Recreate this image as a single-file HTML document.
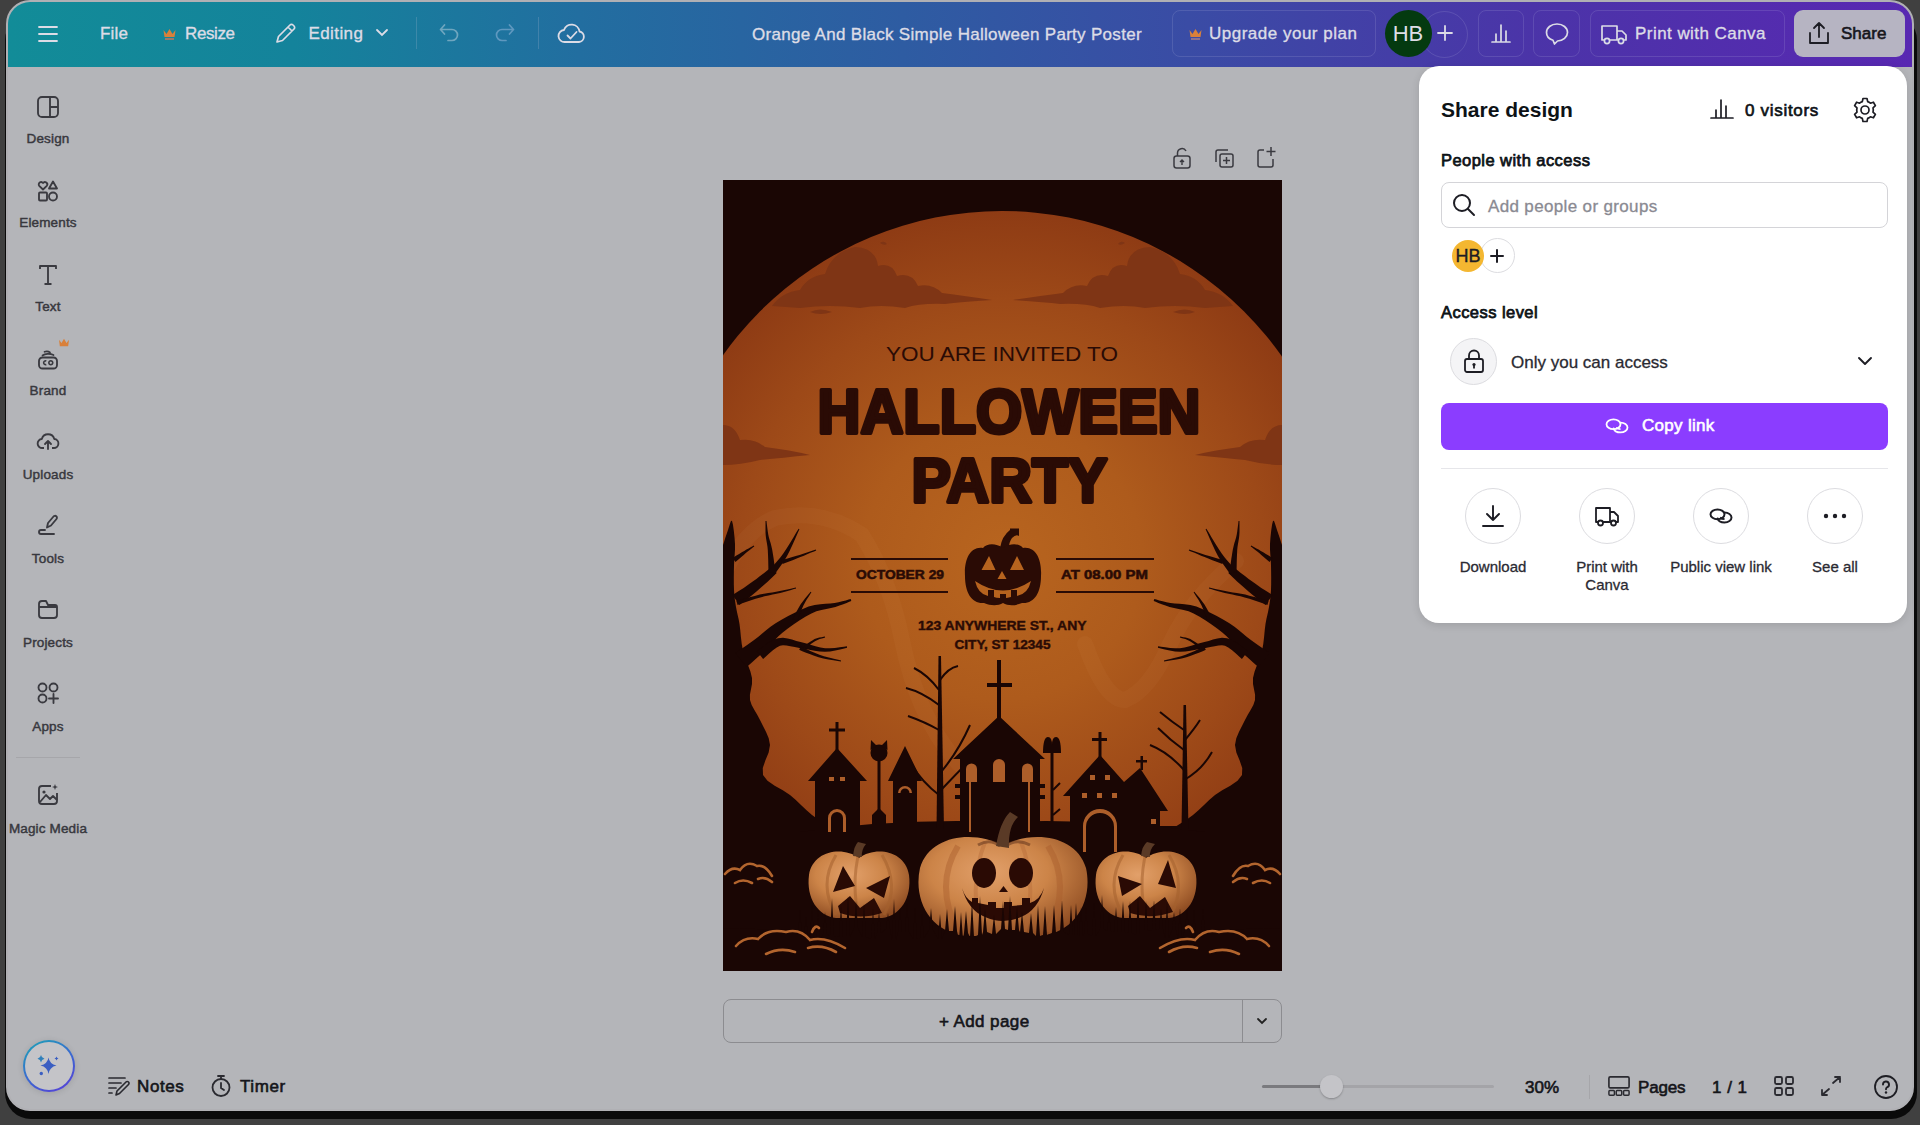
<!DOCTYPE html>
<html><head><meta charset="utf-8">
<style>
*{margin:0;padding:0;box-sizing:border-box}
html,body{width:1920px;height:1125px;overflow:hidden;background:#404040;font-family:"Liberation Sans",sans-serif}
.abs{position:absolute}
#shadow{position:absolute;left:4.5px;top:14px;width:1912px;height:1105px;border-radius:26px;background:#0a0a0a}
#win{position:absolute;left:6px;top:0px;width:1908px;height:1111px;border-radius:24px;background:#b4b5b9;border:2px solid #b0b0b4}
#hdr{position:absolute;left:8px;top:2px;width:1904px;height:65px;border-radius:22px 22px 0 0;background:linear-gradient(90deg,#128c98 0%,#14839b 15%,#226ea0 30%,#2e5ca2 47%,#3a4ca5 62%,#4b34a8 80%,#5828b2 100%)}
.ht{position:absolute;color:#dcdce6;font-size:17px;line-height:20px;white-space:nowrap;-webkit-text-stroke:0.35px currentColor}
.hbox{position:absolute;border:1px solid rgba(200,200,230,0.16);border-radius:8px}
.sb{position:absolute;left:0;width:96px;text-align:center;font-size:13.5px;letter-spacing:0.15px;color:#38383e;line-height:16px;-webkit-text-stroke:0.45px currentColor}
.sbi{position:absolute;left:36px;width:24px;height:24px}
.bt{position:absolute;color:#15151a;font-size:17px;line-height:20px;white-space:nowrap;-webkit-text-stroke:0.6px currentColor}
#panel{position:absolute;left:1419px;top:66px;width:488px;height:557px;background:#fff;border-radius:20px;box-shadow:0 2px 8px rgba(0,0,0,0.12)}
.pt{position:absolute;white-space:nowrap;color:#0d1216}
</style></head><body>
<div id="shadow"></div>
<div id="win"></div>
  <div id="hdr"></div>
  <div class="abs" style="left:7px;top:2px">
    <!-- hamburger -->
    <svg class="abs" style="left:31px;top:23px" width="20" height="18" viewBox="0 0 20 18"><path d="M1 2H19M1 9H19M1 16H19" stroke="#dcdce6" stroke-width="1.8" stroke-linecap="round"/></svg>
    <div class="ht" style="left:93px;top:22px;letter-spacing:0.2px">File</div>
    <svg class="abs" style="left:155px;top:25px" width="15" height="14" viewBox="0 0 15 14"><path d="M1.5 3L4.5 7L7.5 2L10.5 7L13.5 3L12.5 10H2.5Z" fill="#d9803a"/><rect x="3" y="11" width="9" height="2" fill="#9a7a6a"/></svg>
    <div class="ht" style="left:178px;top:22px;letter-spacing:-0.4px">Resize</div>
    <svg class="abs" style="left:267px;top:19px" width="24" height="24" viewBox="0 0 24 24"><path d="M3 21L4.5 15.5L16 4a2.1 2.1 0 0 1 3 0l1 1a2.1 2.1 0 0 1 0 3L8.5 19.5Z M14 6L18 10" fill="none" stroke="#dcdce6" stroke-width="1.7" stroke-linejoin="round"/></svg>
    <div class="ht" style="left:301.5px;top:22px;letter-spacing:0.4px">Editing</div>
    <svg class="abs" style="left:368px;top:26px" width="14" height="10" viewBox="0 0 14 10"><path d="M2 2L7 7L12 2" fill="none" stroke="#dcdce6" stroke-width="1.8" stroke-linecap="round"/></svg>
    <div class="abs" style="left:409px;top:15px;width:1px;height:32px;background:rgba(200,200,220,0.2)"></div>
    <svg class="abs" style="left:430px;top:19px" width="26" height="24" viewBox="0 0 26 24"><path d="M7.5 4L3.5 8.5L7.5 13M3.5 8.5H15a5.5 5.5 0 0 1 0 11H11" fill="none" stroke="#6fa6bf" stroke-width="1.7" stroke-linecap="round" stroke-linejoin="round"/></svg>
    <svg class="abs" style="left:484px;top:19px" width="26" height="24" viewBox="0 0 26 24"><path d="M18.5 4L22.5 8.5L18.5 13M22.5 8.5H11a5.5 5.5 0 0 0 0 11H15" fill="none" stroke="#5f98bf" stroke-width="1.7" stroke-linecap="round" stroke-linejoin="round"/></svg>
    <div class="abs" style="left:531px;top:15px;width:1px;height:32px;background:rgba(200,200,220,0.2)"></div>
    <svg class="abs" style="left:550px;top:18px" width="30" height="28" viewBox="0 0 30 28"><path d="M8 22a6 6 0 0 1-1-12a8 8 0 0 1 15.5 1.5a5.3 5.3 0 0 1 -0.5 10.5Z" fill="none" stroke="#dcdce6" stroke-width="1.8" stroke-linejoin="round"/><path d="M10.5 15.5L13.5 18.5L19.5 12" fill="none" stroke="#dcdce6" stroke-width="1.8" stroke-linecap="round" stroke-linejoin="round"/></svg>
    <div class="ht" style="left:745px;top:23px;letter-spacing:0.3px">Orange And Black Simple Halloween Party Poster</div>
    <div class="hbox" style="left:1165px;top:8px;width:204px;height:47px"></div>
    <svg class="abs" style="left:1181px;top:25px" width="15" height="14" viewBox="0 0 15 14"><path d="M1.5 3L4.5 7L7.5 2L10.5 7L13.5 3L12.5 10H2.5Z" fill="#d9803a"/><rect x="3" y="11" width="9" height="2" fill="#8a7090"/></svg>
    <div class="ht" style="left:1202px;top:22px;letter-spacing:0.5px">Upgrade your plan</div>
    <div class="abs" style="left:1414px;top:8.5px;width:47px;height:47px;border-radius:50%;border:1px solid rgba(200,200,230,0.16)"></div>
    <div class="abs" style="left:1377.5px;top:7.5px;width:47px;height:47px;border-radius:50%;background:#043a10;color:#dedee6;font-size:22px;line-height:47px;text-align:center">HB</div>
    <svg class="abs" style="left:1429px;top:22px" width="18" height="18" viewBox="0 0 18 18"><path d="M9 2V16M2 9H16" stroke="#dcdce6" stroke-width="1.8" stroke-linecap="round"/></svg>
    <div class="hbox" style="left:1471px;top:8px;width:46px;height:47px"></div>
    <svg class="abs" style="left:1482px;top:19px" width="24" height="24" viewBox="0 0 24 24"><path d="M3 21H21M7 20V13M12 20V4M17 20V10" stroke="#dcdce6" stroke-width="1.7" stroke-linecap="round"/></svg>
    <div class="hbox" style="left:1526px;top:8px;width:47px;height:47px"></div>
    <svg class="abs" style="left:1537px;top:19px" width="26" height="26" viewBox="0 0 26 26"><path d="M13 3C7 3 2.5 6.8 2.5 11.5c0 3.6 2.6 6.6 6.5 7.8l1.5 3.7l3-3C19 19.8 23.5 16 23.5 11.5C23.5 6.8 19 3 13 3Z" fill="none" stroke="#dcdce6" stroke-width="1.7" stroke-linejoin="round"/></svg>
    <div class="hbox" style="left:1583px;top:8px;width:195px;height:47px"></div>
    <svg class="abs" style="left:1593px;top:20px" width="28" height="24" viewBox="0 0 28 24"><path d="M2 4H17V18H2Z M17 9H22L26 13V18H17" fill="none" stroke="#dcdce6" stroke-width="1.7" stroke-linejoin="round"/><circle cx="7" cy="19" r="2.6" fill="#4b3ab2" stroke="#dcdce6" stroke-width="1.7"/><circle cx="21" cy="19" r="2.6" fill="#4b3ab2" stroke="#dcdce6" stroke-width="1.7"/></svg>
    <div class="ht" style="left:1628px;top:22px;letter-spacing:0.45px">Print with Canva</div>
    <div class="abs" style="left:1787px;top:8px;width:111px;height:47px;border-radius:9px;background:#b6b4c2"></div>
    <svg class="abs" style="left:1799px;top:18px" width="26" height="26" viewBox="0 0 26 26"><path d="M13 17V3M8 8L13 3L18 8M4 13V23H22V13" fill="none" stroke="#1d1d24" stroke-width="1.8" stroke-linecap="round" stroke-linejoin="round"/></svg>
    <div class="ht" style="left:1834px;top:22px;color:#16161c;-webkit-text-stroke:0.6px #16161c">Share</div>
  </div>

  <!-- sidebar -->
  <svg class="abs" style="left:36px;top:95px" width="24" height="24" viewBox="0 0 24 24"><rect x="2" y="2" width="20" height="20" rx="4" fill="none" stroke="#3a3a40" stroke-width="1.85"/><path d="M14 2V22M14 12H22" stroke="#3a3a40" stroke-width="1.85"/></svg>
  <div class="sb" style="top:131px">Design</div>
  <svg class="abs" style="left:36px;top:179px" width="24" height="24" viewBox="0 0 24 24"><path d="M7 10.5L3.2 6.8A2.3 2.3 0 0 1 7 4A2.3 2.3 0 0 1 10.8 6.8Z" fill="none" stroke="#3a3a40" stroke-width="1.85" stroke-linejoin="round"/><path d="M17 2.5L21 9.5H13Z" fill="none" stroke="#3a3a40" stroke-width="1.85" stroke-linejoin="round"/><rect x="3" y="13.5" width="8" height="8" rx="1" fill="none" stroke="#3a3a40" stroke-width="1.85"/><circle cx="17" cy="17.5" r="4" fill="none" stroke="#3a3a40" stroke-width="1.85"/></svg>
  <div class="sb" style="top:215px">Elements</div>
  <svg class="abs" style="left:36px;top:263px" width="24" height="24" viewBox="0 0 24 24"><path d="M4 6V3H20V6M12 3V21M8.5 21H15.5" fill="none" stroke="#3a3a40" stroke-width="1.85" stroke-linejoin="round"/></svg>
  <div class="sb" style="top:299px">Text</div>
  <svg class="abs" style="left:36px;top:347px" width="24" height="24" viewBox="0 0 24 24"><rect x="3" y="10.5" width="18" height="11" rx="3.5" fill="none" stroke="#3a3a40" stroke-width="1.85"/><path d="M6.5 8.5C9 6.5 14 6.2 17.5 8M8.500 4.800C10.500 4 12.500 4.300 14 5.500" fill="none" stroke="#3a3a40" stroke-width="1.7" stroke-linecap="round"/><path d="M10.3 14A1.9 1.9 0 1 0 10.3 17.5M14.8 13.8A1.95 1.95 0 1 0 14.8 17.7A1.95 1.95 0 1 0 14.8 13.8" fill="none" stroke="#3a3a40" stroke-width="1.6"/></svg>
  <svg class="abs" style="left:58px;top:338px" width="12" height="10" viewBox="0 0 14 12"><path d="M1 2L4 6L7 1L10 6L13 2L12 10H2Z" fill="#d9803a"/></svg>
  <div class="sb" style="top:383px">Brand</div>
  <svg class="abs" style="left:36px;top:429px" width="24" height="24" viewBox="0 0 24 24"><path d="M8 19H6.5A4.5 4.5 0 0 1 5.8 10A6.5 6.5 0 0 1 18.3 10A4.5 4.5 0 0 1 17.5 19H16" fill="none" stroke="#3a3a40" stroke-width="1.85" stroke-linejoin="round"/><path d="M12 20V12.5M9 15L12 12L15 15" fill="none" stroke="#3a3a40" stroke-width="1.85" stroke-linecap="round" stroke-linejoin="round"/></svg>
  <div class="sb" style="top:467px">Uploads</div>
  <svg class="abs" style="left:36px;top:513px" width="24" height="24" viewBox="0 0 24 24"><path d="M11 14.5L12 10L17.5 3.5A1.8 1.8 0 0 1 20.5 6L15 12.5Z" fill="none" stroke="#3a3a40" stroke-width="1.85" stroke-linejoin="round"/><path d="M9 17H5A2 2 0 0 0 5 21H18" fill="none" stroke="#3a3a40" stroke-width="1.85" stroke-linecap="round"/></svg>
  <div class="sb" style="top:551px">Tools</div>
  <svg class="abs" style="left:36px;top:597px" width="24" height="24" viewBox="0 0 24 24"><path d="M3 7V18A3 3 0 0 0 6 21H18A3 3 0 0 0 21 18V10A2 2 0 0 0 19 8H12L10 4H6A3 3 0 0 0 3 7ZM3 10H21" fill="none" stroke="#3a3a40" stroke-width="1.85" stroke-linejoin="round"/></svg>
  <div class="sb" style="top:635px">Projects</div>
  <svg class="abs" style="left:36px;top:681px" width="24" height="24" viewBox="0 0 24 24"><circle cx="6.5" cy="6.5" r="4" fill="none" stroke="#3a3a40" stroke-width="1.85"/><circle cx="17.5" cy="6.5" r="4" fill="none" stroke="#3a3a40" stroke-width="1.85"/><circle cx="6.5" cy="17.5" r="4" fill="none" stroke="#3a3a40" stroke-width="1.85"/><path d="M17.5 13V22M13 17.5H22" stroke="#3a3a40" stroke-width="1.85" stroke-linecap="round"/></svg>
  <div class="sb" style="top:719px">Apps</div>
  <div class="abs" style="left:16px;top:757px;width:64px;height:1px;background:#a6a6aa"></div>
  <svg class="abs" style="left:36px;top:783px" width="24" height="24" viewBox="0 0 24 24"><path d="M15 3H6A3 3 0 0 0 3 6V18A3 3 0 0 0 6 21H18A3 3 0 0 0 21 18V10" fill="none" stroke="#3a3a40" stroke-width="1.85"/><path d="M4 19L10 12L14 16L17 13L21 17" fill="none" stroke="#3a3a40" stroke-width="1.85" stroke-linejoin="round"/><circle cx="8" cy="9" r="1.6" fill="#3a3a40"/><path d="M19 1L19.8 3.2L22 4L19.8 4.8L19 7L18.2 4.8L16 4L18.2 3.2Z" fill="#3a3a40"/></svg>
  <div class="sb" style="top:821px">Magic Media</div>

  <!-- poster -->
<svg class="abs" style="left:723px;top:180px" width="559" height="791" viewBox="723 180 559 791">
<defs>
<radialGradient id="moon" cx="1002" cy="560" r="350" gradientUnits="userSpaceOnUse">
<stop offset="0" stop-color="#b8651f"/><stop offset="0.4" stop-color="#ae5b1c"/><stop offset="0.75" stop-color="#9d4918"/><stop offset="1" stop-color="#8e3b14"/>
</radialGradient>
<radialGradient id="pk" cx="0.42" cy="0.35" r="0.7">
<stop offset="0" stop-color="#e2a06a"/><stop offset="0.5" stop-color="#cc8448"/><stop offset="1" stop-color="#8e4c22"/>
</radialGradient>
<g id="treeL" fill="#1a0604">
<path d="M723.0 545.0 L723.921875 542.1640625 L725.25 538.0625 L726.703125 533.6796875 L728.0 530.0 L729.09375 526.578125 L730.125 523.125 L731.09375 520.859375 L732.0 521.0 L732.9140625 524.546875 L733.8125 530.625 L734.5546875 537.640625 L735.0 544.0 L735.0078125 549.296875 L734.6875 554.375 L734.2734375 559.515625 L734.0 565.0 L733.8828125 571.15625 L733.8125 577.75 L733.8359375 584.21875 L734.0 590.0 L734.32421875 594.8125 L734.78125 599.0 L735.34765625 602.9375 L736.0 607.0 L736.76953125 611.015625 L737.65625 614.875 L738.58984375 619.046875 L739.5 624.0 L740.24609375 630.046875 L740.90625 636.875 L741.73828125 644.015625 L743.0 651.0 L745.12109375 657.8671875 L747.84375 664.8125 L750.39453125 671.6015625 L752.0 678.0 L751.9921875 683.8984375 L750.9375 689.4375 L749.9140625 694.7578125 L750.0 700.0 L751.65625 705.0234375 L754.25 709.8125 L757.21875 714.6953125 L760.0 720.0 L762.8984375 725.78125 L766.0625 731.875 L768.6953125 738.28125 L770.0 745.0 L768.6484375 752.3828125 L765.4375 760.3125 L762.7578125 768.0859375 L763.0 775.0 L767.4765625 780.703125 L774.6875 785.625 L782.8046875 790.234375 L790.0 795.0 L795.828125 800.1171875 L801.25 805.3125 L806.546875 810.3515625 L812.0 815.0 L818.21875 819.453125 L824.875 823.75 L830.84375 827.421875 L835 830 L723 830 Z"/>
<path d="M735.5 562.0 L736.9 560.8 L739.0 559.0 L741.3 556.9 L743.7 554.9 L745.8 553.1 L747.7 551.6 L749.7 550.0 L751.6 548.5 L753.1 547.3 L754.3 546.4 L753.7 545.6 L752.5 546.3 L750.7 547.2 L748.6 548.4 L746.4 549.6 L744.2 550.9 L741.8 552.3 L739.1 553.9 L736.4 555.6 L734.1 557.0 L732.5 558.0Z"/>
<path d="M739.5 604.9 L741.3 603.5 L743.9 601.5 L746.9 599.2 L750.1 596.7 L753.2 594.2 L756.2 591.7 L759.3 589.0 L762.4 586.3 L765.3 583.8 L767.9 581.4 L770.2 579.3 L772.3 577.3 L774.1 575.5 L775.6 574.0 L776.7 573.0 L771.3 567.0 L770.1 568.0 L768.5 569.4 L766.6 571.0 L764.5 572.7 L762.1 574.6 L759.4 576.6 L756.4 578.9 L753.1 581.3 L749.9 583.6 L746.8 585.8 L743.7 587.9 L740.4 590.0 L737.2 592.1 L734.5 593.8 L732.5 595.1Z"/>
<path d="M775.5 571.7 L775.1 568.6 L774.4 564.2 L773.7 559.1 L772.9 554.1 L772.2 549.7 L771.4 546.2 L770.6 543.1 L769.7 540.2 L768.9 537.5 L768.3 534.8 L767.8 531.8 L767.4 528.6 L767.0 525.5 L766.7 522.9 L766.5 521.0 L765.5 521.0 L765.5 522.9 L765.5 525.6 L765.5 528.7 L765.5 532.0 L765.7 535.2 L766.0 538.1 L766.5 541.0 L767.0 543.8 L767.5 546.9 L767.8 550.3 L768.0 554.6 L768.2 559.6 L768.3 564.7 L768.4 569.2 L768.5 572.3Z"/>
<path d="M774.7 574.2 L776.3 571.9 L778.6 568.8 L781.3 565.0 L784.2 560.7 L786.9 556.2 L789.6 550.9 L792.5 544.7 L795.3 538.5 L797.7 533.0 L799.4 529.2 L798.6 528.8 L796.4 532.3 L793.4 537.5 L789.9 543.3 L786.3 549.0 L783.1 553.8 L780.1 557.8 L776.9 561.5 L773.8 564.9 L771.2 567.7 L769.3 569.8Z"/>
<path d="M782.6 563.9 L785.1 563.0 L788.5 561.7 L792.6 560.2 L796.7 558.6 L800.4 557.1 L803.9 555.7 L807.6 554.1 L811.1 552.6 L814.1 551.4 L816.2 550.5 L815.8 549.5 L813.6 550.3 L810.6 551.3 L807.0 552.5 L803.2 553.7 L799.6 554.9 L795.8 556.0 L791.6 557.2 L787.5 558.4 L783.9 559.4 L781.4 560.1Z"/>
<path d="M737.6 604.9 L740.8 603.8 L745.2 602.3 L750.4 600.5 L755.6 598.8 L760.3 597.4 L764.5 596.3 L768.6 595.4 L772.6 594.5 L776.5 593.7 L780.2 592.9 L783.9 591.9 L787.6 590.9 L791.1 589.9 L794.0 589.1 L796.1 588.5 L795.9 587.5 L793.7 588.0 L790.8 588.7 L787.3 589.5 L783.5 590.3 L779.8 591.1 L776.1 591.8 L772.2 592.4 L768.2 593.0 L764.0 593.7 L759.7 594.6 L754.8 595.9 L749.4 597.3 L744.1 598.8 L739.6 600.2 L736.4 601.1Z"/>
<path d="M746.5 667.1 L749.0 664.9 L752.4 661.9 L756.5 658.3 L760.8 654.5 L764.9 650.7 L768.5 647.0 L771.8 643.3 L775.0 639.8 L778.4 636.3 L782.4 632.8 L787.5 628.8 L793.4 624.5 L799.7 620.2 L805.8 616.4 L811.4 613.4 L816.4 611.3 L821.4 610.0 L826.3 609.0 L831.0 608.1 L835.4 607.0 L839.5 605.6 L843.3 604.2 L846.6 602.9 L849.3 601.8 L851.3 600.9 L850.7 599.1 L848.6 599.6 L845.8 600.4 L842.3 601.3 L838.5 602.2 L834.6 603.0 L830.3 603.5 L825.6 603.8 L820.4 604.2 L814.7 605.0 L808.6 606.6 L802.2 609.2 L795.2 612.4 L788.2 616.0 L781.5 619.7 L775.6 623.2 L770.5 626.7 L766.1 630.2 L762.2 633.5 L758.7 636.5 L755.1 639.3 L751.0 642.3 L746.4 645.4 L742.0 648.5 L738.2 651.0 L735.5 652.9Z"/>
<path d="M797.3 621.0 L798.1 618.9 L799.2 615.9 L800.5 612.4 L801.9 608.9 L803.3 605.7 L804.9 602.8 L806.7 599.6 L808.6 596.7 L810.3 594.1 L811.4 592.3 L810.6 591.7 L809.2 593.4 L807.3 595.7 L805.0 598.4 L802.8 601.4 L800.7 604.3 L798.8 607.4 L797.0 610.8 L795.2 614.1 L793.8 617.0 L792.7 619.0Z"/>
<path d="M763.1 658.9 L765.6 656.7 L769.1 653.6 L772.9 650.2 L776.7 647.4 L780.0 645.8 L783.0 645.3 L786.5 645.5 L790.4 646.2 L794.8 647.1 L799.4 647.9 L804.2 648.7 L809.3 649.7 L814.5 650.7 L819.8 651.5 L824.9 651.8 L830.1 651.4 L835.3 650.5 L840.1 649.4 L844.2 648.4 L847.1 647.7 L846.9 646.3 L843.9 646.7 L839.7 647.3 L834.9 647.9 L829.8 648.3 L825.1 648.2 L820.4 647.5 L815.5 646.3 L810.4 644.8 L805.4 643.3 L800.6 642.1 L796.3 640.9 L792.0 639.6 L787.6 638.4 L783.0 637.8 L778.0 638.2 L772.8 640.1 L767.8 643.1 L763.2 646.4 L759.5 649.2 L756.9 651.1Z"/>
<path d="M805.9 648.2 L807.2 647.1 L809.1 645.6 L811.2 643.8 L813.4 642.2 L815.4 640.9 L817.5 639.9 L819.7 639.1 L821.9 638.4 L823.8 637.9 L825.1 637.5 L824.9 636.5 L823.5 636.8 L821.6 637.2 L819.3 637.6 L816.9 638.3 L814.6 639.1 L812.3 640.4 L809.8 641.9 L807.5 643.5 L805.5 644.8 L804.1 645.8Z"/>
<path d="M799.2 649.8 L801.7 650.9 L805.4 652.4 L809.6 654.1 L814.2 655.8 L818.6 657.2 L823.3 658.4 L828.4 659.4 L833.5 660.2 L837.8 661.0 L840.9 661.5 L841.1 660.5 L838.1 659.8 L833.8 658.8 L828.8 657.5 L823.8 656.2 L819.4 654.8 L815.2 653.1 L810.9 651.2 L806.8 649.2 L803.3 647.4 L800.8 646.2Z"/>
</g>
<g id="cloudL" fill="#7f3515"><path d="M772 306 Q782 292 800 290 Q808 276 825 274 Q832 252 855 247 Q876 248 878 266 Q892 262 897 276 Q912 272 918 286 Q932 283 942 293 Q965 296 992 300 Q960 302 945 304 Q920 303 905 308 Q880 304 860 308 Q830 304 800 308 Z M810 312 Q820 307 832 312 Q820 316 810 312 Z M880 243 Q884 240 887 244 Q884 246 880 243Z"/><path d="M723 425 Q735 425 740 440 Q755 438 765 447 Q790 450 810 455 Q780 458 760 460 Q740 465 723 465 Z"/></g>
<g id="bushL" fill="none" stroke="#b3652e" stroke-width="2.6" stroke-linecap="round">
<path d="M725 874 Q732 866 740 870 Q747 860 757 866 Q765 864 772 876"/>
<path d="M735 883 Q743 878 752 883 M758 879 Q765 876 772 882"/>
<path d="M736 946 Q745 936 758 939 Q768 928 786 932 Q800 928 810 940 Q825 936 845 948"/>
<path d="M766 954 Q780 947 795 952 M808 948 Q822 944 836 952"/>
<path d="M812 932 Q815 924 819 928"/>
</g>
</defs>
<rect x="723" y="180" width="559" height="791" fill="#1a0604"/>
<circle cx="1002" cy="553" r="342" fill="url(#moon)"/>
<path d="M726 570 Q745 530 775 518 Q822 508 862 535 Q890 580 902 640 Q918 720 960 765 M1085 644 Q1105 700 1125 700 Q1150 690 1170 644 Q1190 600 1236 561" fill="none" stroke="#ffd0a0" stroke-opacity="0.04" stroke-width="16" stroke-linecap="round"/>
<use href="#cloudL"/>
<use href="#cloudL" transform="translate(2005 0) scale(-1 1)"/>
<use href="#treeL"/>
<use href="#treeL" transform="translate(2005 0) scale(-1 1)"/>
<rect x="723" y="826" width="559" height="145" fill="#1a0604"/>
<path d="M800 832 Q900 818 1002 822 Q1100 818 1205 832 Z" fill="#1a0604"/>
<g fill="#1a0604">
<path d="M808 781 L837 748 L867 781 L860 781 L860 832 L815 832 L815 781 Z"/>
<rect x="835.5" y="722" width="3" height="28"/><rect x="829" y="728.5" width="16" height="3"/>
<rect x="877.5" y="758" width="3" height="72"/><circle cx="879" cy="753" r="8.5"/><path d="M870.5 750 L871 740 L877 746 Z M887.5 750 L887 740 L881 746 Z"/>
<path d="M872 832 L872 815 L879 808 L886 815 L886 832Z"/>
<path d="M888 781 L905 746 L922 781 L917 781 L917 832 L893 832 L893 781 Z"/>
<path d="M936.5 830 L938.5 656 L941 656 L944 830 Z"/>
<path d="M939 690 Q928 675 914 668 M939 705 Q922 692 906 688 M939 730 Q925 722 908 716 M941 772 Q958 752 970 725 M941 790 Q960 770 978 752 M939 795 Q922 782 912 765 M940 680 Q948 668 958 666" stroke="#1a0604" stroke-width="2" fill="none"/>
<rect x="997" y="660" width="4" height="58"/><rect x="987" y="683" width="25" height="4"/>
<path d="M953 759 L999 716 L1045 759 L1040 759 L1040 832 L960 832 L960 759 Z"/>
<rect x="955" y="784" width="6" height="4"/><rect x="955" y="795" width="6" height="4"/><rect x="1039" y="784" width="6" height="4"/><rect x="1039" y="795" width="6" height="4"/>
<rect x="1050.5" y="745" width="3" height="85"/><path d="M1043 753 Q1043 737 1048 737 Q1052 737 1052 745 Q1052 737 1056 737 Q1061 737 1061 753 Z"/>
<path d="M1053 790 L1060 783 M1053 815 L1060 809" stroke="#1a0604" stroke-width="2"/>
<path d="M1063 796 L1100 755 L1124 782 L1140 768 L1168 811 L1160 811 L1160 832 L1070 832 L1070 796 Z"/>
<rect x="1098.5" y="732" width="3" height="25"/><rect x="1092" y="738" width="15" height="3"/>
<rect x="1140.5" y="756" width="2.5" height="14"/><rect x="1136" y="760" width="11" height="2.5"/>
<path d="M1181.5 830 L1183.5 705 L1186 705 L1188.5 830 Z"/>
<path d="M1184 770 Q1168 752 1150 745 M1184 780 Q1202 770 1212 752 M1184 730 Q1172 722 1160 712 M1184 750 Q1170 740 1158 728 M1185 740 Q1195 728 1200 720" stroke="#1a0604" stroke-width="2" fill="none"/>
</g>
<g fill="#ad5e2a">
<rect x="829" y="777" width="5" height="4"/><rect x="840" y="777" width="5" height="4"/>
<path d="M828 832 L828 818 A9 9 0 0 1 846 818 L846 832 L843 832 L843 818 A6 6 0 0 0 831 818 L831 832 Z"/>
<path d="M898 793 A7 7 0 0 1 912 793 L909.5 793 A4.5 4.5 0 0 0 900.5 793 Z"/>
<path d="M966 782 L966 769 A5.5 5.5 0 0 1 977 769 L977 782 Z"/><path d="M993 782 L993 765 A6 6 0 0 1 1005 765 L1005 782 Z"/><path d="M1022 782 L1022 769 A5.5 5.5 0 0 1 1033 769 L1033 782 Z"/>
<rect x="1090" y="775" width="5" height="5"/><rect x="1105" y="775" width="5" height="5"/>
<rect x="1082" y="793" width="5" height="5"/><rect x="1097" y="793" width="5" height="5"/><rect x="1112" y="793" width="5" height="5"/>
<path d="M1083 852 L1083 826 A16 16 0 0 1 1117 826 L1117 852 L1114 852 L1114 827 A13 13 0 0 0 1086 827 L1086 852 Z"/>
<rect x="1151" y="819" width="5" height="5"/>
<rect x="969" y="778" width="2" height="54" fill="#ad5e2a"/><rect x="1028" y="778" width="2" height="54"/>
</g>
<g>
<path d="M859 858 C875 846 905 850 909 875 C912 898 900 916 882 918 L836 918 C818 916 806 898 809 875 C813 850 843 846 859 858 Z" fill="url(#pk)"/>
<path d="M836 855 Q818 885 836 915 M882 855 Q900 885 884 915 M859 852 Q851 885 859 918" fill="none" stroke="#a4602e" stroke-width="3" opacity="0.55"/>
<path d="M853 856 Q854 846 858 842 L866 844 Q861 850 862 857 Z" fill="#5a3a26"/>
<path d="M833 892 L843 866 L855 886 Z M866 888 L890 876 L884 898 Z" fill="#2a0a04"/>
<path d="M838 906 L850 896 L860 908 L874 898 L882 913 Q860 920 840 913 Z" fill="#2a0a04"/>
<path d="M1003 846 C1030 830 1076 834 1086 868 C1093 900 1076 932 1040 936 L966 936 C930 932 913 900 920 868 C930 834 976 830 1003 846 Z" fill="url(#pk)"/>
<path d="M958 846 Q934 885 958 932 M1048 846 Q1072 885 1048 932" fill="none" stroke="#a85e2c" stroke-width="6" opacity="0.45"/>
<path d="M985 842 Q968 885 982 934 M1021 842 Q1038 885 1024 934" fill="none" stroke="#b56a36" stroke-width="4" opacity="0.4"/>
<path d="M978 845 Q990 838 1000 846 M1006 846 Q1016 838 1030 845" fill="none" stroke="#6a3a20" stroke-width="3" opacity="0.6"/>
<path d="M996 846 Q1000 822 1010 812 L1018 817 Q1008 826 1009 848 Z" fill="#5a3a26"/>
<ellipse cx="984" cy="873" rx="12" ry="15" fill="#2a0a04"/><ellipse cx="1021" cy="873" rx="12" ry="15" fill="#2a0a04"/>
<path d="M999 892 L1003.5 886 L1008 892 Z" fill="#2a0a04"/>
<path d="M962 888 Q968 910 985 917 Q1003 925 1021 917 Q1038 910 1044 888 Q1040 900 1030 903 L1030 898 L1022 898 L1022 905 L1012 906 L1012 902 L1004 902 L1004 908 L996 908 L996 902 L988 902 L988 905 L978 903 L978 898 L972 898 L972 902 Q965 898 962 888 Z" fill="#2a0a04"/>
<path d="M1146 858 C1162 846 1192 850 1196 875 C1199 898 1187 916 1169 918 L1123 918 C1105 916 1093 898 1096 875 C1100 850 1130 846 1146 858 Z" fill="url(#pk)"/>
<path d="M1123 855 Q1105 885 1123 915 M1169 855 Q1187 885 1171 915 M1146 852 Q1138 885 1146 918" fill="none" stroke="#a4602e" stroke-width="3" opacity="0.55"/>
<path d="M1141 856 Q1142 846 1147 842 L1155 844 Q1149 850 1150 857 Z" fill="#5a3a26"/>
<path d="M1118 876 L1142 884 L1122 896 Z M1158 884 L1168 860 L1176 888 Z" fill="#2a0a04"/>
<path d="M1128 906 L1140 896 L1150 908 L1165 897 L1173 912 Q1150 920 1130 913 Z" fill="#2a0a04"/>
</g>
<path d="M723 971 L723 928 L795 930 L798 935 L800 910 L802 935 L804 936 L806 917 L808 936 L810 938 L812 905 L814 938 L816 940 L818 910 L820 940 L823 934 L825 912 L827 934 L830 936 L832 898 L834 936 L839 937 L841 905 L843 937 L846 937 L848 896 L850 937 L854 928 L856 901 L858 928 L862 937 L864 904 L866 937 L871 939 L873 909 L875 939 L877 933 L879 911 L881 933 L886 929 L888 913 L890 929 L892 940 L894 899 L896 940 L898 932 L900 908 L902 932 L905 932 L907 903 L909 932 L913 939 L915 907 L917 939 L920 938 L922 914 L924 938 L929 930 L931 908 L933 930 L938 939 L940 914 L942 939 L945 931 L947 909 L949 931 L953 931 L955 906 L957 931 L959 940 L961 912 L963 940 L964 933 L966 911 L968 933 L970 937 L972 901 L974 937 L978 935 L980 896 L982 935 L983 932 L985 909 L987 932 L992 934 L994 915 L996 934 L1001 929 L1003 901 L1005 929 L1008 930 L1010 896 L1012 930 L1015 930 L1017 907 L1019 930 L1020 932 L1022 912 L1024 932 L1029 933 L1031 913 L1033 933 L1036 936 L1038 905 L1040 936 L1043 935 L1045 906 L1047 935 L1052 933 L1054 905 L1056 933 L1060 932 L1062 900 L1064 932 L1069 935 L1071 905 L1073 935 L1074 935 L1076 903 L1078 935 L1079 936 L1081 907 L1083 936 L1084 934 L1086 908 L1088 934 L1092 936 L1094 902 L1096 936 L1100 929 L1102 895 L1104 929 L1107 931 L1109 914 L1111 931 L1114 932 L1116 907 L1118 932 L1121 932 L1123 901 L1125 932 L1128 933 L1130 901 L1132 933 L1136 935 L1138 896 L1140 935 L1144 931 L1146 901 L1148 931 L1152 930 L1154 900 L1156 930 L1159 929 L1161 909 L1163 929 L1165 938 L1167 902 L1169 938 L1172 930 L1174 912 L1176 930 L1178 939 L1180 908 L1182 939 L1185 929 L1187 910 L1189 929 L1192 938 L1194 909 L1196 938 L1201 931 L1203 909 L1205 931 L1210 930 L1282 928 L1282 971 Z" fill="#1a0604"/>
<use href="#bushL"/>
<use href="#bushL" transform="translate(2005 0) scale(-1 1)"/>
<g fill="#2a0b05" font-family="Liberation Sans, sans-serif">
<text x="886" y="360.5" font-size="20" textLength="232" lengthAdjust="spacingAndGlyphs">YOU ARE INVITED TO</text>
<text x="817.5" y="433" font-size="63" font-weight="bold" textLength="383" lengthAdjust="spacingAndGlyphs" stroke="#2a0b05" stroke-width="4" stroke-linejoin="round">HALLOWEEN</text>
<text x="911.5" y="502" font-size="63" font-weight="bold" textLength="196" lengthAdjust="spacingAndGlyphs" stroke="#2a0b05" stroke-width="4" stroke-linejoin="round">PARTY</text>
<text x="856" y="579.3" font-size="12" font-weight="bold" textLength="88" lengthAdjust="spacingAndGlyphs" stroke="#2a0b05" stroke-width="0.5">OCTOBER 29</text>
<text x="1061" y="579.3" font-size="12" font-weight="bold" textLength="87" lengthAdjust="spacingAndGlyphs" stroke="#2a0b05" stroke-width="0.5">AT 08.00 PM</text>
<text x="918" y="630" font-size="13" font-weight="bold" textLength="168.5" lengthAdjust="spacingAndGlyphs" stroke="#2a0b05" stroke-width="0.4">123 ANYWHERE ST., ANY</text>
<text x="954.5" y="648.6" font-size="12.5" font-weight="bold" textLength="96" lengthAdjust="spacingAndGlyphs" stroke="#2a0b05" stroke-width="0.4">CITY, ST 12345</text>
</g>
<g stroke="#2a0b05" stroke-width="2"><path d="M851 559H948M851 592H948M1056 559H1154M1056 592H1154"/></g>
<g fill="#2a0b05">
<path d="M1000 548 Q1002 536 1010 530 L1010 528.5 L1019 528.5 L1019 536 Q1016 534 1012 538 Q1009 542 1009 548 Z"/>
<path fill-rule="evenodd" d="M1003 548 C996 543 987 543 983 548 C970 546 964 560 965 576 C965 593 972 604 984 603 C991 606 998 606 1003 603 C1008 606 1015 606 1022 603 C1034 604 1041 593 1041 576 C1042 560 1036 546 1023 548 C1019 543 1010 543 1003 548 Z
M981.5 570 L989 556 L995.5 570 Z M1010 570 L1017 556 L1024 570 Z M997.5 579 L1002 571 L1006.5 579 Z
M975 581 Q1003 600 1031 581 Q1028 594 1017 596 L1017 590 L1011 590 L1011 597 Q1007 598 1006 598 L1006 594 L1000 594 L1000 598 Q996 598 994 597 L994 590 L988 590 L988 596 Q978 594 975 581 Z"/>
</g>
</svg>
  <!-- canvas toolbar -->
  <svg class="abs" style="left:1171px;top:147px" width="22" height="22" viewBox="0 0 22 22"><rect x="3" y="9" width="16" height="12" rx="2.5" fill="none" stroke="#3a3a40" stroke-width="1.5"/><path d="M6.5 9V6A4.5 4.5 0 0 1 15 4" fill="none" stroke="#3a3a40" stroke-width="1.5"/><path d="M11 18V13M9 15L11 13L13 15" fill="none" stroke="#3a3a40" stroke-width="1.4"/></svg>
  <svg class="abs" style="left:1213px;top:147px" width="22" height="22" viewBox="0 0 22 22"><path d="M15 3H5A2 2 0 0 0 3 5V15" fill="none" stroke="#3a3a40" stroke-width="1.5"/><rect x="7" y="7" width="13" height="13" rx="2" fill="none" stroke="#3a3a40" stroke-width="1.5"/><path d="M13.5 10V17M10 13.5H17" stroke="#3a3a40" stroke-width="1.5"/></svg>
  <svg class="abs" style="left:1255px;top:146px" width="22" height="22" viewBox="0 0 22 22"><path d="M9 4H5A2 2 0 0 0 3 6V19A2 2 0 0 0 5 21H16A2 2 0 0 0 18 19V13" fill="none" stroke="#3a3a40" stroke-width="1.5"/><path d="M16 1V10M11.5 5.5H20.5" stroke="#3a3a40" stroke-width="1.5"/></svg>

  <!-- add page -->
  <div class="abs" style="left:723px;top:999px;width:559px;height:44px;border:1px solid #8c8c90;border-radius:8px"></div>
  <div class="abs" style="left:1242px;top:1000px;width:1px;height:42px;background:#8c8c90"></div>
  <div class="bt" style="left:939px;top:1012px;letter-spacing:0.4px">+ Add page</div>
  <svg class="abs" style="left:1255px;top:1015px" width="14" height="12" viewBox="0 0 14 12"><path d="M3 4L7 8L11 4" fill="none" stroke="#222" stroke-width="1.8" stroke-linecap="round"/></svg>

  <!-- bottom bar -->
  <div class="abs" style="left:22.5px;top:1040px;width:52px;height:52px;border-radius:50%;background:linear-gradient(150deg,#1aa6b4 0%,#3a6ad0 50%,#5a3ad8 100%);box-shadow:0 1px 6px rgba(0,0,0,0.12)"></div>
  <div class="abs" style="left:24.5px;top:1042px;width:48px;height:48px;border-radius:50%;background:#c4c4c8"></div>
  <svg class="abs" style="left:33px;top:1051px" width="30" height="30" viewBox="0 0 30 30"><path d="M15.5 6.5Q16.5 13 23.5 14.5Q16.5 16 15.5 23Q14.5 16 7.5 14.5Q14.5 13 15.5 6.5Z" fill="#3a5ec2"/><path d="M8 4Q8.5 7 11.5 7.8Q8.5 8.5 8 11.5Q7.5 8.5 4.5 7.8Q7.5 7 8 4Z" fill="#2f7fba"/><path d="M23.5 5.5Q23.8 7.2 25.5 7.5Q23.8 7.8 23.5 9.5Q23.2 7.8 21.5 7.5Q23.2 7.2 23.5 5.5Z" fill="#3a5ec2"/><circle cx="8.3" cy="22.5" r="1.7" fill="#3a5ec2"/></svg>
  <svg class="abs" style="left:107px;top:1075px" width="24" height="22" viewBox="0 0 24 22"><path d="M2 3H18M2 8H14M2 13H9M2 18H5" stroke="#2a2a30" stroke-width="1.7" stroke-linecap="round"/><path d="M9 20L10 16L19 7A1.6 1.6 0 0 1 21.5 9.5L12.5 18.5Z" fill="none" stroke="#2a2a30" stroke-width="1.6" stroke-linejoin="round"/></svg>
  <div class="bt" style="left:137px;top:1077px;letter-spacing:0.6px">Notes</div>
  <svg class="abs" style="left:209px;top:1074px" width="24" height="24" viewBox="0 0 24 24"><circle cx="12" cy="13.5" r="8.5" fill="none" stroke="#2a2a30" stroke-width="1.8"/><path d="M9 2H15M12 2V5M12 9V14L15 16" fill="none" stroke="#2a2a30" stroke-width="1.8" stroke-linecap="round"/></svg>
  <div class="bt" style="left:240px;top:1077px;letter-spacing:0.6px">Timer</div>

  <div class="abs" style="left:1262px;top:1085px;width:232px;height:3px;border-radius:2px;background:#a4a4a8"></div>
  <div class="abs" style="left:1262px;top:1085px;width:70px;height:3px;border-radius:2px;background:#7a7a7e"></div>
  <div class="abs" style="left:1320px;top:1075px;width:23px;height:23px;border-radius:50%;background:#c4c4c8;box-shadow:0 1px 2px rgba(0,0,0,0.25)"></div>
  <div class="bt" style="left:1525px;top:1077.5px">30%</div>
  <div class="abs" style="left:1589px;top:1075px;width:1px;height:24px;background:#a6a6aa"></div>
  <svg class="abs" style="left:1607px;top:1075px" width="24" height="22" viewBox="0 0 26 24"><rect x="2" y="2" width="22" height="12" rx="1.5" fill="none" stroke="#2a2a30" stroke-width="1.8"/><rect x="2" y="17" width="6" height="5" rx="1" fill="none" stroke="#2a2a30" stroke-width="1.6"/><rect x="10" y="17" width="6" height="5" rx="1" fill="none" stroke="#2a2a30" stroke-width="1.6"/><rect x="18" y="17" width="6" height="5" rx="1" fill="none" stroke="#2a2a30" stroke-width="1.6"/></svg>
  <div class="bt" style="left:1638px;top:1077.5px;letter-spacing:-0.2px">Pages</div>
  <div class="bt" style="left:1712px;top:1077.5px;letter-spacing:0.5px">1 / 1</div>
  <svg class="abs" style="left:1773px;top:1075px" width="22" height="22" viewBox="0 0 22 22"><rect x="2" y="2" width="7" height="7" rx="1.5" fill="none" stroke="#2a2a30" stroke-width="1.8"/><rect x="13" y="2" width="7" height="7" rx="1.5" fill="none" stroke="#2a2a30" stroke-width="1.8"/><rect x="2" y="13" width="7" height="7" rx="1.5" fill="none" stroke="#2a2a30" stroke-width="1.8"/><rect x="13" y="13" width="7" height="7" rx="1.5" fill="none" stroke="#2a2a30" stroke-width="1.8"/></svg>
  <svg class="abs" style="left:1819px;top:1075px" width="24" height="22" viewBox="0 0 24 22"><path d="M14 8L21 2M16 2H21V7M10 14L3 20M3 15V20H8" fill="none" stroke="#2a2a30" stroke-width="1.8" stroke-linecap="round" stroke-linejoin="round"/></svg>
  <svg class="abs" style="left:1873px;top:1074px" width="26" height="26" viewBox="0 0 26 26"><circle cx="13" cy="13" r="11" fill="none" stroke="#1e1e24" stroke-width="1.8"/><path d="M10 10.5A3 3 0 1 1 14 13.3C13.2 13.8 13 14.3 13 15.3" fill="none" stroke="#1e1e24" stroke-width="1.9" stroke-linecap="round"/><circle cx="13" cy="18.5" r="1.2" fill="#1e1e24"/></svg>


<div id="panel"></div>
<div class="pt" style="left:1441px;top:97px;font-size:21px;line-height:26px;font-weight:bold">Share design</div>
<svg class="abs" style="left:1709px;top:97px" width="26" height="24" viewBox="0 0 26 24"><path d="M2 21H24M7 20V13M12 20V3M17 20V9" stroke="#1d1d24" stroke-width="1.7" stroke-linecap="round"/></svg>
<div class="pt" style="left:1745px;top:101px;font-size:17px;line-height:20px;letter-spacing:0.7px;-webkit-text-stroke:0.65px #0d1216">0 visitors</div>
<svg class="abs" style="left:1851px;top:96px" width="28" height="28" viewBox="0 0 28 28"><path d="M12 2.5H16L16.7 5.6A9 9 0 0 1 19.4 7.2L22.4 6.2L24.4 9.6L22 11.8A9 9 0 0 1 22 16.2L24.4 18.4L22.4 21.8L19.4 20.8A9 9 0 0 1 16.7 22.4L16 25.5H12L11.3 22.4A9 9 0 0 1 8.6 20.8L5.6 21.8L3.6 18.4L6 16.2A9 9 0 0 1 6 11.8L3.6 9.6L5.6 6.2L8.6 7.2A9 9 0 0 1 11.3 5.6Z" fill="none" stroke="#1d1d24" stroke-width="1.7" stroke-linejoin="round"/><circle cx="14" cy="14" r="4" fill="none" stroke="#1d1d24" stroke-width="1.7"/></svg>
<div class="pt" style="left:1441px;top:151px;font-size:16.5px;line-height:19px;letter-spacing:0.45px;-webkit-text-stroke:0.75px #0d1216">People with access</div>
<div class="abs" style="left:1441px;top:182px;width:447px;height:46px;border:1px solid #d4d4d8;border-radius:8px"></div>
<svg class="abs" style="left:1451px;top:192px" width="26" height="26" viewBox="0 0 26 26"><circle cx="11" cy="11" r="8" fill="none" stroke="#1d1d24" stroke-width="2"/><path d="M17 17L23 23" stroke="#1d1d24" stroke-width="2" stroke-linecap="round"/></svg>
<div class="pt" style="left:1488px;top:196.5px;font-size:17px;line-height:20px;color:#8a8a92;letter-spacing:0.35px;-webkit-text-stroke:0.3px currentColor">Add people or groups</div>
<div class="abs" style="left:1480px;top:238px;width:35px;height:35px;border-radius:50%;border:1px solid #dcdce0;background:#fff"></div>
<svg class="abs" style="left:1487px;top:246px" width="20" height="20" viewBox="0 0 20 20"><path d="M10 4V16M4 10H16" stroke="#1d1d24" stroke-width="2" stroke-linecap="round"/></svg>
<div class="abs" style="left:1452px;top:240px;width:32px;height:32px;border-radius:50%;background:#f4b731;color:#1d1d24;font-size:18px;line-height:32px;text-align:center;-webkit-text-stroke:0.4px #1d1d24">HB</div>
<div class="pt" style="left:1441px;top:303px;font-size:16.5px;line-height:19px;letter-spacing:0.45px;-webkit-text-stroke:0.75px #0d1216">Access level</div>
<div class="abs" style="left:1450px;top:338px;width:47px;height:47px;border-radius:50%;border:1px solid #dcdce0;background:#f4f4f6"></div>
<svg class="abs" style="left:1462px;top:348px" width="24" height="26" viewBox="0 0 24 26"><rect x="3" y="11" width="18" height="13" rx="2" fill="none" stroke="#1d1d24" stroke-width="1.8"/><path d="M7 11V7.5A5 5 0 0 1 17 7.5V11" fill="none" stroke="#1d1d24" stroke-width="1.8"/><circle cx="12" cy="16.5" r="1.6" fill="#1d1d24"/><path d="M12 17V20.5" stroke="#1d1d24" stroke-width="1.8"/></svg>
<div class="pt" style="left:1511px;top:352.5px;font-size:17px;line-height:20px;color:#2a2a32;-webkit-text-stroke:0.3px currentColor">Only you can access</div>
<svg class="abs" style="left:1856px;top:354px" width="18" height="14" viewBox="0 0 18 14"><path d="M3 4L9 10L15 4" fill="none" stroke="#1d1d24" stroke-width="1.9" stroke-linecap="round" stroke-linejoin="round"/></svg>
<div class="abs" style="left:1441px;top:403px;width:447px;height:47px;border-radius:8px;background:#8b3dff"></div>
<svg class="abs" style="left:1603px;top:415px" width="28" height="22" viewBox="0 0 28 22"><ellipse cx="10.5" cy="9.3" rx="7" ry="4.9" fill="none" stroke="#fff" stroke-width="1.8"/><path d="M13 12.6C14.300 13.600 16 14.100 17.500 14.100" fill="none" stroke="#fff" stroke-width="1.8"/><path d="M17.500 7.6C21.400 7.6 24.500 9.800 24.500 12.500C24.500 15.200 21.400 17.400 17.500 17.400C14 17.400 11.300 15.700 10.700 13.400" fill="none" stroke="#fff" stroke-width="1.8" stroke-linecap="round"/></svg>
<div class="pt" style="left:1642px;top:416px;font-size:17px;line-height:20px;color:#fff;letter-spacing:0.3px;-webkit-text-stroke:0.6px #fff">Copy link</div>
<div class="abs" style="left:1441px;top:468px;width:447px;height:1px;background:#e6e6ea"></div>
<div class="abs" style="left:1465px;top:488px;width:56px;height:56px;border-radius:50%;border:1px solid #dcdce0"></div>
<div class="abs" style="left:1579px;top:488px;width:56px;height:56px;border-radius:50%;border:1px solid #dcdce0"></div>
<div class="abs" style="left:1693px;top:488px;width:56px;height:56px;border-radius:50%;border:1px solid #dcdce0"></div>
<div class="abs" style="left:1807px;top:488px;width:56px;height:56px;border-radius:50%;border:1px solid #dcdce0"></div>
<svg class="abs" style="left:1481px;top:504px" width="24" height="24" viewBox="0 0 24 24"><path d="M12 2V16M6 10L12 16L18 10M2 22H22" fill="none" stroke="#1d1d24" stroke-width="1.9" stroke-linecap="round" stroke-linejoin="round"/></svg>
<svg class="abs" style="left:1594px;top:504px" width="26" height="24" viewBox="0 0 26 24"><path d="M2 4H16V18H2Z M16 8H20L24 12V18H16" fill="none" stroke="#1d1d24" stroke-width="1.8" stroke-linejoin="round"/><circle cx="6.5" cy="19" r="2.5" fill="#fff" stroke="#1d1d24" stroke-width="1.8"/><circle cx="19.5" cy="19" r="2.5" fill="#fff" stroke="#1d1d24" stroke-width="1.8"/></svg>
<svg class="abs" style="left:1707px;top:505px" width="28" height="22" viewBox="0 0 28 22"><ellipse cx="10.5" cy="9.3" rx="7" ry="4.9" fill="none" stroke="#1d1d24" stroke-width="2"/><path d="M13 12.6C14.300 13.600 16 14.100 17.500 14.100" fill="none" stroke="#1d1d24" stroke-width="2"/><path d="M17.500 7.6C21.400 7.6 24.500 9.800 24.500 12.500C24.500 15.200 21.400 17.400 17.500 17.400C14 17.400 11.300 15.700 10.700 13.400" fill="none" stroke="#1d1d24" stroke-width="2" stroke-linecap="round"/></svg>
<svg class="abs" style="left:1821px;top:504px" width="28" height="24" viewBox="0 0 28 24"><circle cx="5" cy="12" r="2.2" fill="#1d1d24"/><circle cx="14" cy="12" r="2.2" fill="#1d1d24"/><circle cx="23" cy="12" r="2.2" fill="#1d1d24"/></svg>
<div class="pt" style="left:1443px;top:558px;width:100px;text-align:center;font-size:15px;line-height:18px;color:#2a2a32;-webkit-text-stroke:0.3px currentColor">Download</div>
<div class="pt" style="left:1557px;top:558px;width:100px;text-align:center;font-size:15px;line-height:18px;color:#2a2a32;-webkit-text-stroke:0.3px currentColor;white-space:normal">Print with<br>Canva</div>
<div class="pt" style="left:1661px;top:558px;width:120px;text-align:center;font-size:15px;line-height:18px;color:#2a2a32;-webkit-text-stroke:0.3px currentColor">Public view link</div>
<div class="pt" style="left:1785px;top:558px;width:100px;text-align:center;font-size:15px;line-height:18px;color:#2a2a32;-webkit-text-stroke:0.3px currentColor">See all</div>

</body></html>
